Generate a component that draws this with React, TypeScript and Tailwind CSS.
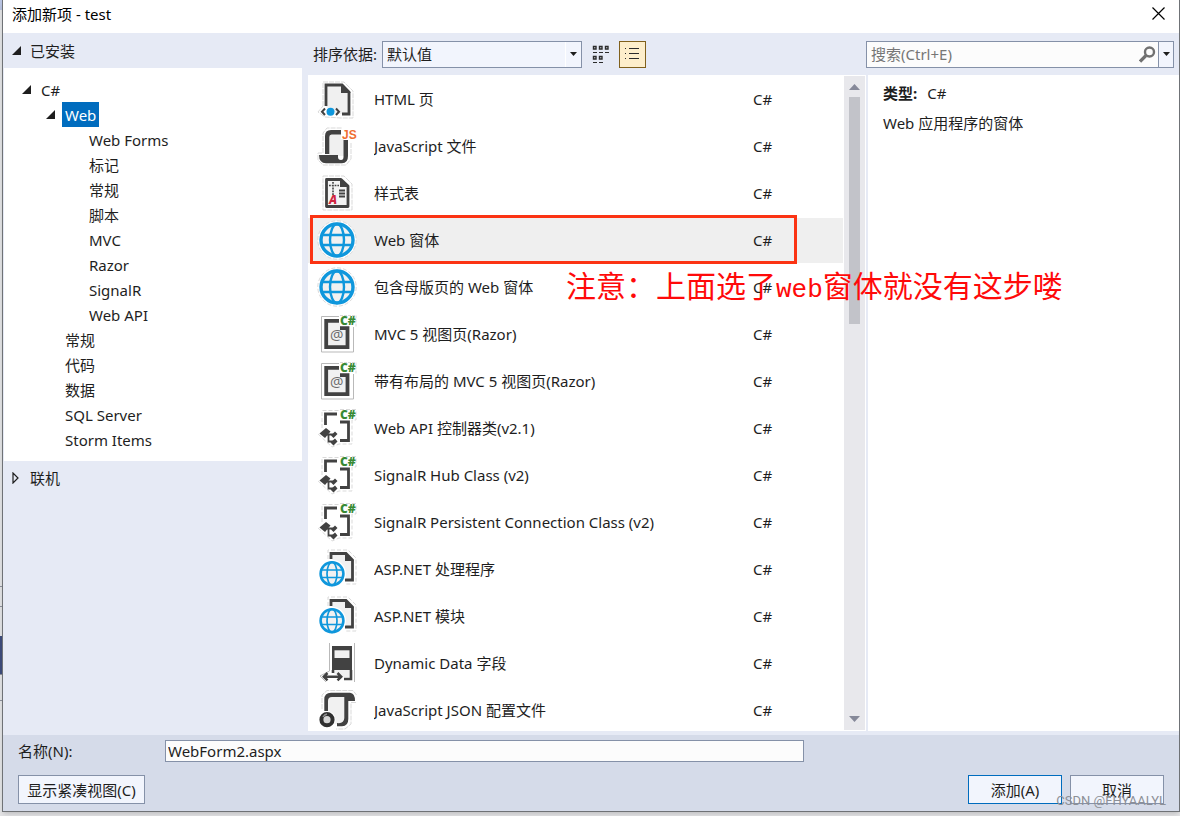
import { useState } from 'react'
import type { ReactNode } from 'react'

interface TreeNode {
  label: string
  level: number
  open?: boolean
}

interface Template {
  name: string
  icon: ReactNode
}

const DARK = '#424242'
const BLUE = '#0f97dc'
const HALO = '#d9d9d9'

const tree: TreeNode[] = [
  { label: 'C#', level: 0, open: true },
  { label: 'Web', level: 1, open: true },
  { label: 'Web Forms', level: 2 },
  { label: '标记', level: 2 },
  { label: '常规', level: 2 },
  { label: '脚本', level: 2 },
  { label: 'MVC', level: 2 },
  { label: 'Razor', level: 2 },
  { label: 'SignalR', level: 2 },
  { label: 'Web API', level: 2 },
  { label: '常规', level: 1 },
  { label: '代码', level: 1 },
  { label: '数据', level: 1 },
  { label: 'SQL Server', level: 1 },
  { label: 'Storm Items', level: 1 },
]

const indents = ['pl-[18px]', 'pl-[42px]', 'pl-[66px]']

function Icon({ children }: { children: ReactNode }) {
  return (
    <svg width="40" height="47" viewBox="0 0 40 47" fill="none" className="flex-none">
      {children}
    </svg>
  )
}

function CSharpMark() {
  return (
    <text x="23" y="14" fontSize="12" fontWeight="800" fill="#388a34" fontFamily="Open Sans, sans-serif">
      C#
    </text>
  )
}

function HtmlIcon() {
  return (
    <Icon>
      <path d="M6 30V6H27L36 15V42H24L8 41L1 36Z" fill="#fff" stroke={HALO} strokeDasharray="5 1" />
      <path d="M9 9H25V17H32V38H20L9 31Z" fill="#f0f0f0" />
      <path d="M9 30V9H25L32 16V38H25" stroke={DARK} strokeWidth="2.8" />
      <path d="M24 8L34 17H24Z" fill={DARK} />
      <circle cx="13.5" cy="35.7" r="4" fill={BLUE} />
      <path d="M8 32.5L5 35.7L8 39M19 32.5L22 35.7L19 39" stroke={DARK} strokeWidth="2" />
    </Icon>
  )
}

function JsIcon() {
  return (
    <Icon>
      <path d="M6 30V10L10 5H25M34 20V36L29 42H6L1 37V30H6" stroke={HALO} strokeDasharray="5 1" />
      <path d="M12 11H24V16H27V33H12Z" fill="#f0f0f0" />
      <path d="M8 31V13Q8 7 14 7H24V11.5H14.5Q12.3 11.5 12.3 14V31Z" fill={DARK} />
      <path d="M2 32H21V34Q21 37 24 37Q26.5 37 26.5 34V17H31V33Q31 40.3 25 40.3H9Q2 40 2 32Z" fill={DARK} />
      <text x="25" y="15.5" fontSize="12" fontWeight="700" fill="#ef6f32" fontFamily="Liberation Sans, sans-serif">
        JS
      </text>
    </Icon>
  )
}

function StyleSheetIcon() {
  return (
    <Icon>
      <path d="M6 6H27L35 14V40H6Z" stroke={HALO} strokeDasharray="5 1" />
      <path d="M9.5 9.5H24L31 16V36.5H9.5Z" fill="#f3f3f3" stroke={DARK} strokeWidth="2.8" strokeLinejoin="round" />
      <path d="M23 8.5L32 17H23Z" fill={DARK} />
      <path d="M12 15.5H22M16 12V25" stroke={DARK} strokeWidth="1.6" strokeDasharray="1.8 1" />
      <path d="M22 20.5H28M22 23.5H28M22 26.5H28" stroke={DARK} strokeWidth="1.8" />
      <text x="12" y="34" fontSize="12" fontWeight="800" fontStyle="italic" fill="#d0253f" fontFamily="Open Sans, sans-serif">
        A
      </text>
    </Icon>
  )
}

function GlobeIcon() {
  return (
    <Icon>
      <circle cx="20" cy="23" r="19.2" fill="#fff" stroke={HALO} strokeDasharray="4 2" />
      <g stroke={BLUE}>
        <circle cx="20" cy="23" r="16" fill="#f1f1f1" strokeWidth="3.4" />
        <ellipse cx="20" cy="23" rx="7" ry="16" strokeWidth="2.4" />
        <path d="M5 18H35M5 28H35" strokeWidth="2.4" />
      </g>
    </Icon>
  )
}

function ViewPageIcon() {
  return (
    <Icon>
      <path d="M22 5.5H4.5V41H36.5V16" stroke="#b9b9b9" />
      <path d="M23 4.5H39V16" stroke={HALO} strokeDasharray="3 1" />
      <path d="M9 10H22L24 17H31V36H9Z" fill="#f1f1f1" />
      <path d="M22 9.8H9.2V36.2H30.5V17.2H23" stroke={DARK} strokeWidth="3.8" />
      <text x="19.8" y="29" textAnchor="middle" fontSize="15" fill="#6b6b6b" fontFamily="Open Sans, sans-serif">
        @
      </text>
      <CSharpMark />
    </Icon>
  )
}

function ClassIcon() {
  return (
    <Icon>
      <path d="M5 23V5.5H22M23 4.5H39V15H35V39H22L15 42L1 29" stroke={HALO} strokeDasharray="4 2" />
      <path d="M8.5 20V9H20M23 17H31.5V35.5H23" stroke={DARK} strokeWidth="2.8" />
      <path d="M2.5 28.5L9 23L13.5 26.5L8 33Z" fill={DARK} />
      <path d="M10 29.5H17M11.5 30V36.5H17" stroke={DARK} strokeWidth="1.8" />
      <path d="M14 30.5L18 26.5L20.5 29L16.5 33ZM13.5 37.5L18 33.5L20.5 36.5L16.5 40.5Z" fill={DARK} />
      <CSharpMark />
    </Icon>
  )
}

function HandlerIcon() {
  return (
    <Icon>
      <path d="M11 13V4H31L39 12V38H28" stroke={HALO} strokeDasharray="4 2" />
      <path d="M14 8H29L35 14V34H20Z" fill="#f1f1f1" />
      <path d="M14 13V7.5H29L35.5 14V34H28" stroke={DARK} strokeWidth="2.8" />
      <path d="M28 6.5L37 15H28Z" fill={DARK} />
      <circle cx="15" cy="27.7" r="14" fill="#fff" />
      <g stroke={BLUE}>
        <circle cx="15" cy="27.7" r="11.4" fill="#f1f1f1" strokeWidth="2.6" />
        <ellipse cx="15" cy="27.7" rx="5" ry="11.6" strokeWidth="1.7" />
        <path d="M4 24H26M4 31.5H26" strokeWidth="1.7" />
      </g>
    </Icon>
  )
}

function FieldIcon() {
  return (
    <Icon>
      <path d="M12.5 3V31L3 36L9 42M37.5 3V42" stroke="#b9b9b9" />
      <path d="M15 6H35V30H15Z" fill={DARK} />
      <path d="M17.5 10.3H32.5V18H17.5Z" fill="#f1f1f1" />
      <path d="M17 30H33V37H24L17 34Z" fill="#f1f1f1" />
      <path d="M16 30V33M34 30V39H27" stroke={DARK} strokeWidth="2.6" />
      <path d="M7 36.7H24M10.5 33L6.8 36.7L10.5 40.4M20.5 33L24.2 36.7L20.5 40.4" stroke={DARK} strokeWidth="2.5" />
    </Icon>
  )
}

function JsonIcon() {
  return (
    <Icon>
      <path d="M5 22V8L10 3.5H36L39.5 8M39 15.5H34V37L28 42H19" stroke={HALO} strokeDasharray="5 1" />
      <path d="M11 9H28V37H11Z" fill="#f1f1f1" />
      <path d="M7.3 24V12.5Q7.3 5.7 14 5.7H33Q38 6 38 14H31.3V32Q31.3 39.3 25 39.3H20V36Q27 37 27.3 31V10H15Q11 10 11 14V24Z" fill={DARK} />
      <circle cx="10" cy="32.7" r="8.6" fill="#fff" />
      <circle cx="10" cy="32.7" r="5.6" fill="#d5d5d5" stroke="#303030" strokeWidth="4" />
      <path d="M6 30Q7.5 27.5 10 27" stroke="#8d8d8d" strokeWidth="1.4" />
    </Icon>
  )
}

const templates: Template[] = [
  { name: 'HTML 页', icon: <HtmlIcon /> },
  { name: 'JavaScript 文件', icon: <JsIcon /> },
  { name: '样式表', icon: <StyleSheetIcon /> },
  { name: 'Web 窗体', icon: <GlobeIcon /> },
  { name: '包含母版页的 Web 窗体', icon: <GlobeIcon /> },
  { name: 'MVC 5 视图页(Razor)', icon: <ViewPageIcon /> },
  { name: '带有布局的 MVC 5 视图页(Razor)', icon: <ViewPageIcon /> },
  { name: 'Web API 控制器类(v2.1)', icon: <ClassIcon /> },
  { name: 'SignalR Hub Class (v2)', icon: <ClassIcon /> },
  { name: 'SignalR Persistent Connection Class (v2)', icon: <ClassIcon /> },
  { name: 'ASP.NET 处理程序', icon: <HandlerIcon /> },
  { name: 'ASP.NET 模块', icon: <HandlerIcon /> },
  { name: 'Dynamic Data 字段', icon: <FieldIcon /> },
  { name: 'JavaScript JSON 配置文件', icon: <JsonIcon /> },
]

function OpenArrow() {
  return (
    <svg width="9" height="9" viewBox="0 0 9 9">
      <path d="M9 0V9H0Z" fill="#1e1e1e" />
    </svg>
  )
}

function DownArrow() {
  return (
    <svg width="7" height="4" viewBox="0 0 7 4">
      <path d="M0 0H7L3.5 4Z" fill="#1e1e1e" />
    </svg>
  )
}

export default function App() {
  const [selected, setSelected] = useState('Web 窗体')
  const [fileName, setFileName] = useState('WebForm2.aspx')

  return (
    <div className="flex h-screen overflow-hidden bg-[#e4e4e6] pb-1 font-['Noto_Sans','Noto_Sans_CJK_SC',sans-serif] text-[15px] leading-5 text-[#1e1e1e]">
      {/* 后面窗口露出的边缘 */}
      <div className="flex w-0.5 flex-none flex-col bg-[#e2e3e5]">
        <div className="h-[10px] bg-[#b9c4e2]" />
        <div className="h-[576px]" />
        <div className="h-[21px] border-y border-[#8d919c]" />
        <div className="h-[29px]" />
        <div className="h-[38px] bg-[#3f4d7c]" />
        <div className="h-[27px] border-y border-[#8d919c]" />
      </div>

      <div className="relative flex min-w-0 flex-1 flex-col border-x border-b border-[#6f7276] bg-[#e6eaf5] shadow-md">
        {/* 标题栏 */}
        <header className="flex h-[33px] flex-none items-center justify-between bg-white pr-[14px] pb-1.5 pl-[9px] text-black">
          <h1>添加新项 - test</h1>
          <button type="button" aria-label="关闭">
            <svg width="13" height="13" viewBox="0 0 13 13" fill="none" stroke="#000" strokeWidth="1.2">
              <path d="M0.5 0.5L12.5 12.5M12.5 0.5L0.5 12.5" />
            </svg>
          </button>
        </header>

        <div className="flex min-h-0 flex-1 pb-1">
          {/* 左侧分类树 */}
          <nav className="mr-1.5 w-[299px] flex-none pl-px">
            <button type="button" className="flex h-[35px] w-full items-center gap-[9px] pl-2">
              <OpenArrow />
              已安装
            </button>
            <ul className="bg-white py-[9px]">
              {tree.map((node, index) => (
                <li key={index} className={`flex h-[25px] items-center ${indents[node.level]}`}>
                  <span className="w-4 flex-none">{node.open && <OpenArrow />}</span>
                  <button
                    type="button"
                    className={`h-[25px] px-[3px] ${node.label === 'Web' ? 'bg-[#006cbe] text-white' : ''}`}
                  >
                    {node.label}
                  </button>
                </li>
              ))}
            </ul>
            <button type="button" className="flex h-[33px] w-full items-center gap-[9px] pl-2">
              <svg width="9" height="12" viewBox="0 0 9 12" fill="none">
                <path d="M1 1V11L6 6Z" stroke="#1e1e1e" strokeWidth="1.2" />
              </svg>
              联机
            </button>
          </nav>

          {/* 模板列表 */}
          <section className="flex min-w-0 flex-1 flex-col">
            <div className="flex h-[42px] flex-none items-center pl-[5px]">
              <label htmlFor="sort" className="w-[69px] whitespace-nowrap">
                排序依据:
              </label>
              <div className="relative">
                <select
                  id="sort"
                  className="h-[27px] w-[200px] appearance-none border border-[#8591a8] bg-[#f2f5fd] pl-1 outline-none"
                >
                  <option>默认值</option>
                </select>
                <span className="pointer-events-none absolute inset-y-px right-px flex w-4 items-center justify-center border-l border-white">
                  <DownArrow />
                </span>
              </div>
              <button type="button" aria-label="小图标" className="ml-[10px]">
                <svg width="18" height="19" viewBox="0 0 18 19" fill="none" stroke="#2b2b2b">
                  <path d="M1.5 1.5H4V4H1.5ZM7.5 1.5H10V4H7.5ZM13.5 1.5H16V4H13.5ZM1.5 11.5H4V14H1.5ZM7.5 11.5H10V14H7.5Z" strokeWidth="1.4" />
                  <path d="M1 7.5H5M7 7.5H11M13 7.5H17M1 17.5H5M7 17.5H11" />
                </svg>
              </button>
              <button
                type="button"
                aria-label="列表"
                className="ml-[9px] flex h-[27px] w-[27px] items-center justify-center border border-[#80601c] bg-[#fdeecb] pr-px pb-0.5"
              >
                <svg width="14" height="13" viewBox="0 0 14 13" fill="none" stroke="#2b2b2b">
                  <path d="M0 1.5H1M4 1.5H14M0 6.5H1M4 6.5H14M0 11.5H1M4 11.5H14" />
                </svg>
              </button>
            </div>
            <div className="flex min-h-0 flex-1 bg-white pt-px pb-px">
              <ul className="min-w-0 flex-1 overflow-x-visible overflow-y-clip">
                {templates.map(item => (
                  <li key={item.name} className="relative h-[47px] py-px">
                    <button
                      type="button"
                      onClick={() => setSelected(item.name)}
                      className={`flex h-[45px] w-full items-center pl-[9px] text-left ${
                        selected === item.name ? 'bg-[#efefef]' : ''
                      }`}
                    >
                      {item.icon}
                      <span className="ml-[17px] flex-1 truncate pb-0.5">{item.name}</span>
                      <span className="w-[90px] flex-none pb-0.5">C#</span>
                    </button>
                    {item.name === 'Web 窗体' && (
                      <span className="pointer-events-none absolute -top-0.5 right-[46px] bottom-0 left-0.5 border-3 border-[#fb3313]" />
                    )}
                    {item.name === '包含母版页的 Web 窗体' && (
                      <p className="pointer-events-none absolute top-0 left-[258px] z-10 font-['Noto_Sans_CJK_SC',sans-serif] text-[30px] leading-10 whitespace-nowrap text-[#ff0a0a]">
                        注意：上面选了<span className="font-['Liberation_Mono',monospace] text-[26px]">web</span>
                        窗体就没有这步喽
                      </p>
                    )}
                  </li>
                ))}
              </ul>
              {/* 滚动条 */}
              <div className="mx-px flex w-[21px] flex-none flex-col items-center justify-between bg-[#e8e8ec] py-2">
                <svg width="11" height="6" viewBox="0 0 11 6">
                  <path d="M0 6H11L5.5 0Z" fill="#868999" />
                </svg>
                <div className="mt-[7px] mb-auto h-[227px] w-[11px] bg-[#c2c3c9]" />
                <svg width="11" height="6" viewBox="0 0 11 6">
                  <path d="M0 0H11L5.5 6Z" fill="#868999" />
                </svg>
              </div>
            </div>
          </section>

          {/* 右侧说明 */}
          <aside className="flex w-[313px] flex-none flex-col">
            <div className="flex h-[42px] flex-none items-center pr-[5px]">
              <div className="flex h-[27px] flex-1 items-center border border-[#8591a8] bg-[#fcfcfc]">
                <input
                  type="search"
                  aria-label="搜索"
                  placeholder="搜索(Ctrl+E)"
                  className="min-w-0 flex-1 bg-transparent pl-1 outline-none placeholder:text-[#767676]"
                />
                <svg width="17" height="17" viewBox="0 0 17 17" fill="none" stroke="#717171" className="mr-0.5">
                  <circle cx="10.5" cy="6" r="4.5" strokeWidth="2.4" />
                  <path d="M7 9.5L1 15.5" strokeWidth="3.2" />
                </svg>
                <button
                  type="button"
                  aria-label="搜索选项"
                  className="flex h-full w-[15px] items-center justify-center border-l border-[#8591a8] bg-[#f2f5fd]"
                >
                  <DownArrow />
                </button>
              </div>
            </div>
            <div className="flex flex-1 flex-col gap-[10px] border-l-2 border-[#e6eaf5] bg-white pt-2 pl-[15px]">
              <p>
                <strong className="mr-[10px]">类型:</strong>C#
              </p>
              <p>Web 应用程序的窗体</p>
            </div>
          </aside>
        </div>

        {/* 底部 */}
        <footer className="flex-none bg-[#d5dbe9] px-[15px] pt-[5px] pb-[7px]">
          <div className="flex items-center pr-[360px]">
            <label htmlFor="name" className="w-[147px] flex-none">
              名称(N):
            </label>
            <input
              id="name"
              value={fileName}
              onChange={e => setFileName(e.target.value)}
              className="h-[22px] min-w-0 flex-1 border border-[#8591a8] bg-[#fcfcfc] pl-0.5 outline-none"
            />
          </div>
          <div className="mt-[13px] flex h-[29px] gap-2">
            <button type="button" className="mr-auto w-[127px] border border-[#8591a8] bg-[#f2f5fd]">
              显示紧凑视图(C)
            </button>
            <button type="button" className="w-[94px] border border-[#006cbe] bg-[#f2f5fd]">
              添加(A)
            </button>
            <button type="button" className="w-[94px] border border-[#8591a8] bg-[#f2f5fd]">
              取消
            </button>
          </div>
        </footer>

        <span className="pointer-events-none absolute right-[13px] bottom-0.5 font-[Roboto,sans-serif] text-[13px] leading-4 text-[#8c8f96]">
          CSDN @FHYAALYL
        </span>
      </div>
    </div>
  )
}
